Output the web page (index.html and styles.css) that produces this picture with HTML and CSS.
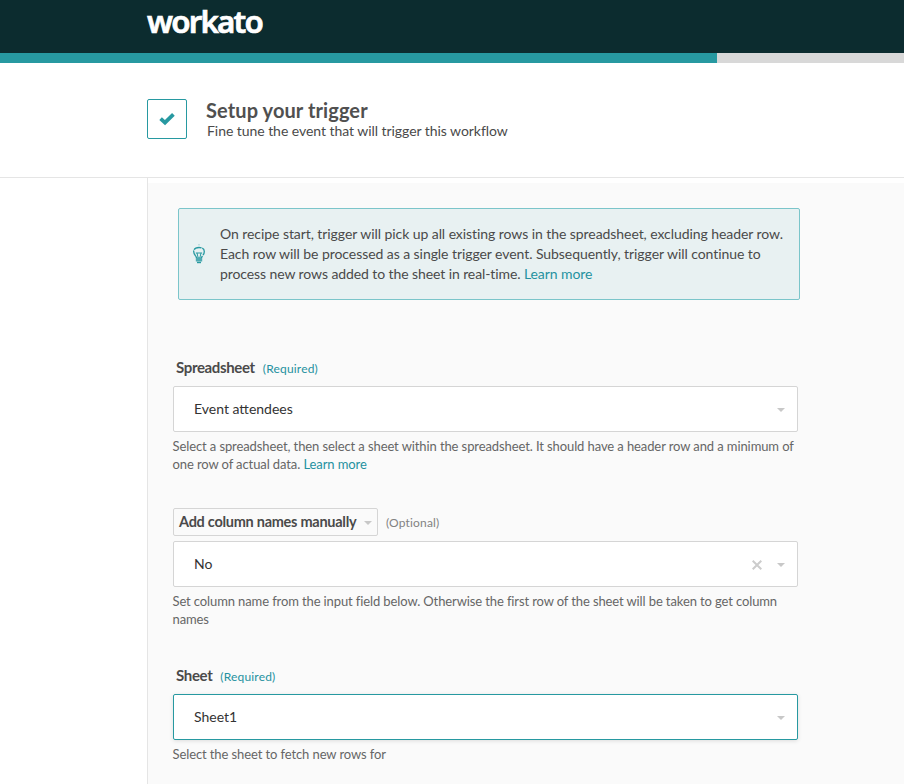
FILE: index.html
```html
<!DOCTYPE html>
<html lang="en">
<head>
<meta charset="utf-8">
<title>Setup your trigger</title>
<link rel="stylesheet" href="styles.css">
</head>
<body>
<header class="topbar">
  <svg class="logo" width="130" height="53" viewBox="0 0 130 53"><text x="0" y="33" textLength="115" lengthAdjust="spacingAndGlyphs">workato</text></svg>
</header>
<div class="progress"><div class="progress-fill"></div></div>
<section class="intro">
  <div class="check">
    <svg width="18" height="14" viewBox="0 0 18 14"><path d="M2.600 6.700 7 10.700 15.400 2.400" fill="none" stroke="#2799a1" stroke-width="3.800"/></svg>
  </div>
  <div class="intro-text">
    <h1>Setup your trigger</h1>
    <p>Fine tune the event that will trigger this workflow</p>
  </div>
</section>
<main class="panel">
  <div class="notice">
    <svg class="bulb" width="14" height="20" viewBox="0 0 14 20" fill="none" stroke="#2799a1">
      <path d="M4.500 14C4.500 12 1.700 11 1.700 7.500C1.700 4.800 3.800 3.500 7 3.500s5.300 1.300 5.300 4C12.300 11 9.500 12 9.500 14" stroke-width="1.300" stroke-dasharray="8 .8"/>
      <path d="M3.800 9h6.400M5 9l1.200 5M9 9l-1.200 5" stroke-width="1"/>
      <path d="M3.800 13.500h6.400v4H3.800z" fill="#2799a1" stroke="none" opacity=".8"/>
      <path d="M5 18.500h4" stroke-width="1.400"/>
      <path d="M6.400 .8h1.200" stroke-width="1" opacity=".5"/>
    </svg>
    <p>
      <span class="line">On recipe start, trigger will pick up all existing rows in the spreadsheet, excluding header row.</span>
      <span class="line">Each row will be processed as a single trigger event. Subsequently, trigger will continue to</span>
      <span class="line tight">process new rows added to the sheet in real-time. <a>Learn more</a></span>
    </p>
  </div>

  <div class="field spreadsheet">
    <div class="label-row"><label>Spreadsheet</label><span class="flag">(Required)</span></div>
    <div class="select"><span>Event attendees</span><i class="caret"></i></div>
    <p class="hint"><span class="line">Select a spreadsheet, then select a sheet within the spreadsheet. It should have a header row and a minimum of</span>
    <span class="line">one row of actual data. <a>Learn more</a></span></p>
  </div>

  <div class="field columns">
    <div class="label-row"><div class="label-select"><label>Add column names manually</label><i class="caret"></i></div><span class="flag optional">(Optional)</span></div>
    <div class="select"><span>No</span><svg class="clear" width="10" height="10" viewBox="0 0 10 10"><path d="M.7.700l8.600 8.600M9.300.700l-8.600 8.600" stroke="#ccc" stroke-width="2"/></svg><i class="caret"></i></div>
    <p class="hint"><span class="line tight">Set column name from the input field below. Otherwise the first row of the sheet will be taken to get column</span>
    <span class="line">names</span></p>
  </div>

  <div class="field sheet">
    <div class="label-row"><label>Sheet</label><span class="flag">(Required)</span></div>
    <div class="select focused"><span>Sheet1</span><i class="caret"></i></div>
    <p class="hint"><span class="line">Select the sheet to fetch new rows for</span></p>
  </div>
</main>
</body>
</html>
```

FILE: styles.css
```css
* { box-sizing: border-box; }
body { margin: 0; background: #fff; font-family: Lato, "Liberation Sans", sans-serif; color: #4a4a4a; height: 784px; overflow: hidden; }
h1, p { margin: 0; }
a { color: #2591a0; }
.topbar { height: 53px; background: #0c2c2f; padding-left: 147px; }
.logo { display: block; overflow: visible; }
.logo text { font: 600 31px "Noto Sans", sans-serif; letter-spacing: -1.8px; fill: #fff; stroke: #fff; stroke-width: .7px; }
.progress { height: 10px; background: #d8d8d8; }
.progress-fill { width: 717px; height: 10px; background: #2799a1; }
.intro { height: 115px; border-bottom: 1px solid #e5e5e5; padding: 36px 0 0 147px; display: flex; }
.check { width: 40px; height: 40px; border: 1px solid #2799a1; border-radius: 2px; display: flex; align-items: center; justify-content: center; margin-right: 19px; }
.intro-text { margin-top: -1px; }
.intro-text h1 { font-size: 20px; line-height: 24px; font-weight: 700; color: #505050; letter-spacing: .1px; }
.intro-text p { font-size: 14px; line-height: 17px; letter-spacing: -.05px; padding-left: 1px; }
.panel { margin-left: 147px; height: 606px; border-left: 1px solid #e5e5e5; background: linear-gradient(#fff 5px, #fafafa 5px); padding: 30px 0 0 25px; }
.notice { width: 622px; height: 92px; margin-left: 5px; border: 1px solid #7bc5ca; border-radius: 2px; background: #e8f1f2; display: flex; align-items: center; padding-left: 13px; }
.notice p { font-size: 14px; line-height: 20px; margin-left: 14px; letter-spacing: -.065px; }
.line { display: block; white-space: nowrap; width: max-content; }
.notice .tight { letter-spacing: -.09px; }
.field { width: 625px; }
.spreadsheet { margin-top: 54px; }
.columns { margin-top: 35px; }
.sheet { margin-top: 34px; }
.label-row { height: 32px; display: flex; align-items: center; padding: 0 0 6px 3px; }
.label-row label { font-size: 15px; font-weight: 700; line-height: 20px; letter-spacing: -.35px; white-space: nowrap; }
.flag { font-size: 12px; line-height: 18px; color: #2591a0; margin: 3px 0 0 8px; letter-spacing: .17px; }
.columns .label-row { height: 33px; padding: 0 0 5px; }
.columns .flag { margin-top: 2px; }
.label-select { width: 205px; height: 28px; border: 1px solid #d5d5d5; border-radius: 2px; display: flex; align-items: center; justify-content: space-between; padding: 0 5px; }
.label-select label { font-size: 14.5px; letter-spacing: -.27px; margin-top: -1px; }
.optional { color: #828282; }
.select { height: 46px; border: 1px solid #d5d5d5; border-radius: 2px; background: #fff; display: flex; align-items: center; padding: 0 12px 0 20px; font-size: 14px; color: #333; }
.select > span { margin: -2px auto 0 0; }
.clear { margin-right: 15px; margin-top: 2px; }
.caret { width: 8px; height: 4px; background: #c8c8c8; clip-path: polygon(0 0, 100% 0, 50% 100%); margin-top: 2px; }
.focused { border-color: #2799a1; box-shadow: 0 1px 4px rgba(0,0,0,.12); }
.hint { font-size: 13px; line-height: 18px; color: #666; padding-top: 5px; letter-spacing: -.1px; margin-left: -.5px; }
.hint .tight { letter-spacing: -.115px; }
```
